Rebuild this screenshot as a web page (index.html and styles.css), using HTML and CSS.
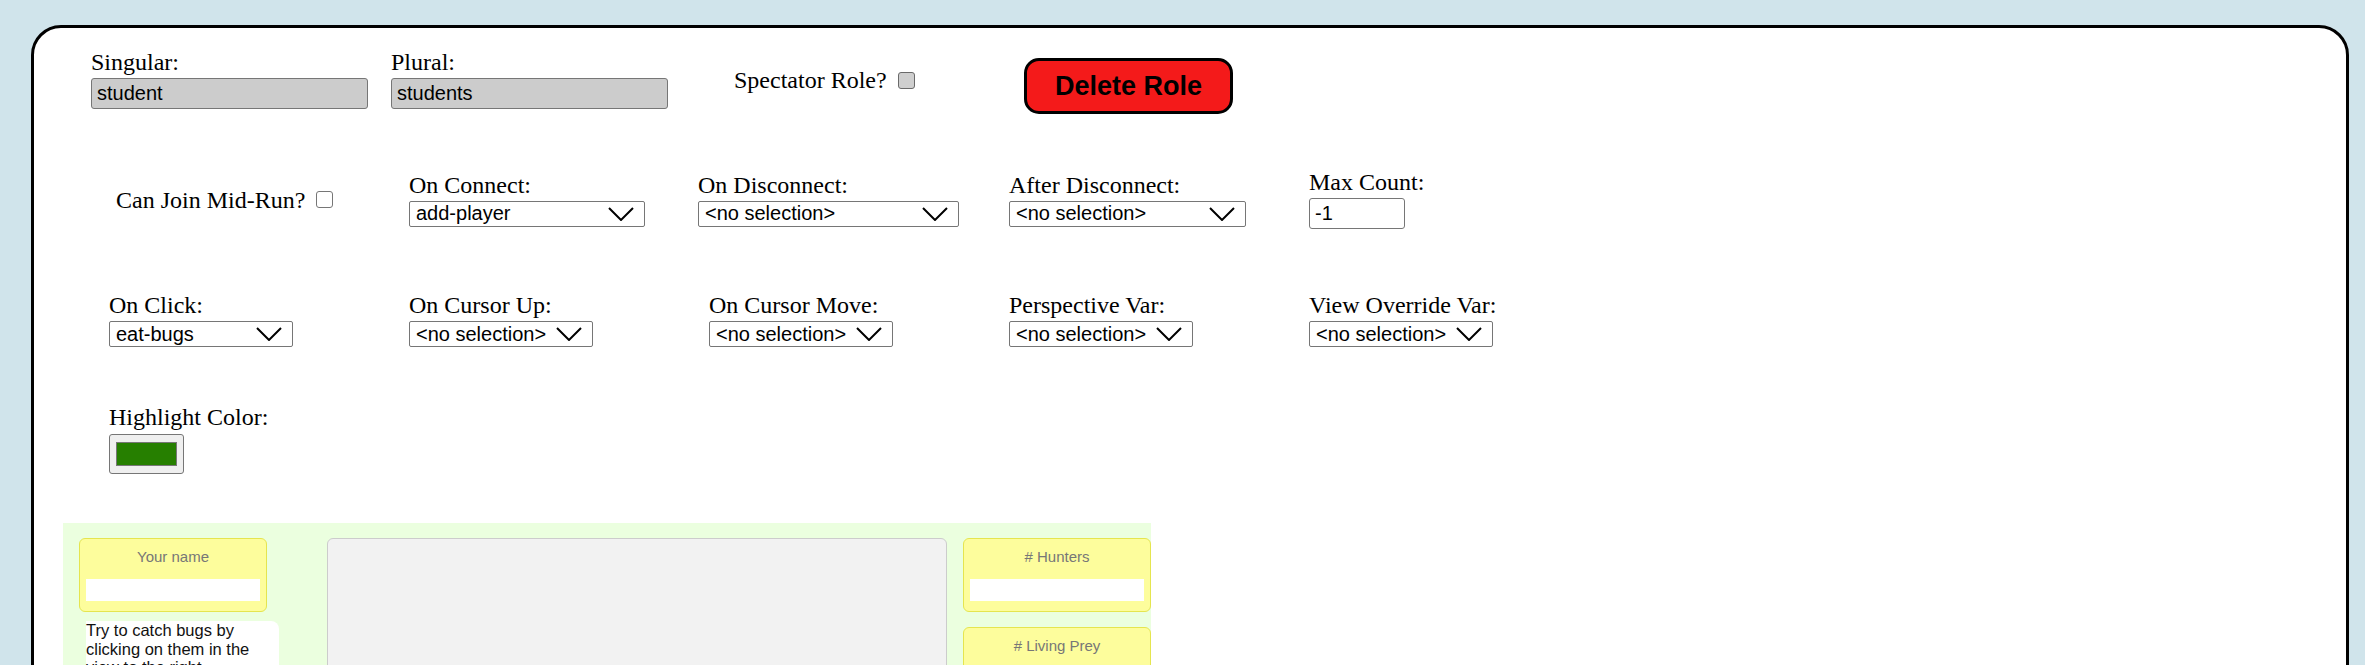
FILE: index.html
```html
<!DOCTYPE html>
<html>
<head>
<meta charset="utf-8">
<title>Role Editor</title>
<link rel="stylesheet" href="styles.css">
</head>
<body>
<div class="panel">
  <div class="row row1">
    <div class="field">
      <label class="lbl">Singular:</label>
      <input class="textbox gray w277" type="text" value="student">
    </div>
    <div class="field">
      <label class="lbl">Plural:</label>
      <input class="textbox gray w277" type="text" value="students">
    </div>
    <div class="check-field spectator">
      <span class="lbl-inline">Spectator Role?</span><span class="cb cb-gray"></span>
    </div>
    <button class="delete">Delete Role</button>
  </div>

  <div class="row row2">
    <div class="check-field joinmid">
      <span class="lbl-inline">Can Join Mid-Run?</span><span class="cb"></span>
    </div>
    <div class="field">
      <label class="lbl">On Connect:</label>
      <div class="select w236"><span>add-player</span><svg class="chev" viewBox="0 0 26 14"><polyline points="1,1 13,13 25,1"/></svg></div>
    </div>
    <div class="field">
      <label class="lbl">On Disconnect:</label>
      <div class="select w261"><span>&lt;no selection&gt;</span><svg class="chev" viewBox="0 0 26 14"><polyline points="1,1 13,13 25,1"/></svg></div>
    </div>
    <div class="field">
      <label class="lbl">After Disconnect:</label>
      <div class="select w237"><span>&lt;no selection&gt;</span><svg class="chev" viewBox="0 0 26 14"><polyline points="1,1 13,13 25,1"/></svg></div>
    </div>
    <div class="field">
      <label class="lbl">Max Count:</label>
      <input class="textbox white w96" type="text" value="-1">
    </div>
  </div>

  <div class="row row3">
    <div class="field">
      <label class="lbl">On Click:</label>
      <div class="select w184"><span>eat-bugs</span><svg class="chev" viewBox="0 0 26 14"><polyline points="1,1 13,13 25,1"/></svg></div>
    </div>
    <div class="field">
      <label class="lbl">On Cursor Up:</label>
      <div class="select w184"><span>&lt;no selection&gt;</span><svg class="chev" viewBox="0 0 26 14"><polyline points="1,1 13,13 25,1"/></svg></div>
    </div>
    <div class="field">
      <label class="lbl">On Cursor Move:</label>
      <div class="select w184"><span>&lt;no selection&gt;</span><svg class="chev" viewBox="0 0 26 14"><polyline points="1,1 13,13 25,1"/></svg></div>
    </div>
    <div class="field">
      <label class="lbl">Perspective Var:</label>
      <div class="select w184"><span>&lt;no selection&gt;</span><svg class="chev" viewBox="0 0 26 14"><polyline points="1,1 13,13 25,1"/></svg></div>
    </div>
    <div class="field">
      <label class="lbl">View Override Var:</label>
      <div class="select w184"><span>&lt;no selection&gt;</span><svg class="chev" viewBox="0 0 26 14"><polyline points="1,1 13,13 25,1"/></svg></div>
    </div>
  </div>

  <div class="row row4">
    <div class="field">
      <label class="lbl">Highlight Color:</label>
      <div class="color-btn"><span class="swatch"></span></div>
    </div>
  </div>

  <div class="preview">
    <div class="pcol left">
      <div class="card">
        <div class="card-title">Your name</div>
        <div class="card-input"></div>
      </div>
      <div class="note">Try to catch bugs by clicking on them in the view to the right.</div>
    </div>
    <div class="canvas"></div>
    <div class="pcol right">
      <div class="card">
        <div class="card-title"># Hunters</div>
        <div class="card-input"></div>
      </div>
      <div class="card">
        <div class="card-title"># Living Prey</div>
        <div class="card-input"></div>
      </div>
    </div>
  </div>
</div>
</body>
</html>
```

FILE: styles.css
```css
html, body {
  margin: 0;
  padding: 0;
  overflow: hidden;
}
body {
  background: #d0e4eb;
  height: 665px;
  font-family: "Liberation Serif", "Times New Roman", serif;
}
.panel {
  margin: 25px 16px 0 31px;
  background: #ffffff;
  border: 3px solid #000000;
  border-radius: 30px;
  height: 800px;
  padding-top: 22px;
  box-sizing: border-box;
}
.row {
  display: grid;
  align-items: center;
}
.row1 {
  margin-left: 57px;
  grid-template-columns: 300px 343px 290px auto;
}
.row2 {
  margin-left: 75px;
  margin-top: 61px;
  grid-template-columns: 300px 289px 311px 300px auto;
}
.row3 {
  margin-left: 75px;
  margin-top: 64px;
  grid-template-columns: 300px 300px 300px 300px auto;
}
.row4 {
  margin-left: 75px;
  margin-top: 58px;
}
.field {
  display: flex;
  flex-direction: column;
  align-items: flex-start;
}
.lbl {
  display: block;
  font-size: 24px;
  line-height: 25px;
  margin-bottom: 3px;
  color: #000;
}
.lbl-inline {
  font-size: 24px;
  line-height: 28px;
  color: #000;
}
.check-field {
  display: flex;
  align-items: flex-start;
}
.joinmid {
  padding-left: 7px;
}
.cb {
  display: inline-block;
  width: 15px;
  height: 15px;
  border: 1px solid #767676;
  border-radius: 3px;
  background: #fff;
  margin: 5px 0 0 11px;
}
.cb-gray {
  background: #cfcfcf;
  border-color: #6a6a6a;
  margin-top: 6px;
}
.textbox {
  box-sizing: border-box;
  height: 31px;
  border: 1px solid #767676;
  border-radius: 3px;
  font-family: "Liberation Sans", Arial, sans-serif;
  font-size: 20px;
  padding: 0 5px;
  color: #000;
  margin: 0;
  outline: none;
}
.gray { background: #cccccc; }
.white { background: #ffffff; }
.w277 { width: 277px; }
.w96 { width: 96px; }
.select {
  box-sizing: border-box;
  height: 26px;
  border: 1px solid #767676;
  border-radius: 2px;
  background: #fff;
  display: flex;
  align-items: center;
  justify-content: space-between;
  padding: 0 10px 0 6px;
  font-family: "Liberation Sans", Arial, sans-serif;
  font-size: 20px;
  color: #000;
  white-space: nowrap;
}
.w236 { width: 236px; }
.w261 { width: 261px; }
.w237 { width: 237px; }
.w184 { width: 184px; }
.chev {
  width: 26px;
  height: 14px;
  flex: none;
}
.chev polyline {
  fill: none;
  stroke: #000;
  stroke-width: 2;
}
.delete {
  align-self: start;
  margin-top: 8px;
  margin-bottom: -5px;
  width: 209px;
  height: 56px;
  box-sizing: border-box;
  background: #f41a1a;
  border: 3px solid #000;
  border-radius: 15px;
  font-family: "Liberation Sans", Arial, sans-serif;
  font-weight: bold;
  font-size: 27px;
  color: #000;
  padding: 0;
}
.color-btn {
  box-sizing: border-box;
  width: 75px;
  height: 40px;
  margin-top: 1px;
  background: #efefef;
  border: 1px solid #767676;
  border-radius: 3px;
  display: flex;
  align-items: center;
  justify-content: center;
}
.swatch {
  display: block;
  box-sizing: border-box;
  width: 61px;
  height: 24px;
  background: #267f00;
  border: 1px solid #777;
}
.preview {
  margin: 49px 0 0 29px;
  width: 1088px;
  height: 400px;
  box-sizing: border-box;
  background: #ebffdf;
  padding: 15px 0 0 16px;
  display: flex;
  align-items: flex-start;
  font-family: "Liberation Sans", Arial, sans-serif;
}
.pcol {
  display: flex;
  flex-direction: column;
}
.pcol.left {
  width: 200px;
}
.pcol.right {
  width: 188px;
  margin-left: 16px;
  gap: 15px;
}
.card {
  box-sizing: border-box;
  width: 188px;
  height: 74px;
  background: #fdfd9c;
  border: 1px solid #e5e54f;
  border-radius: 6px;
  padding: 9px 6px 0 6px;
}
.card-title {
  text-align: center;
  color: #777;
  font-size: 15px;
  line-height: 17px;
}
.card-input {
  margin-top: 14px;
  height: 22px;
  background: #fff;
}
.note {
  margin: 9px 0 0 7px;
  width: 193px;
  background: #fff;
  border-radius: 0 8px 0 0;
  font-size: 16.5px;
  line-height: 18.5px;
  color: #111;
  padding-right: 6px;
  box-sizing: border-box;
}
.canvas {
  margin-left: 48px;
  width: 621px;
  height: 300px;
  box-sizing: border-box;
  background: #f2f2f2;
  border: 1px solid #cccccc;
  border-radius: 6px;
}
```
